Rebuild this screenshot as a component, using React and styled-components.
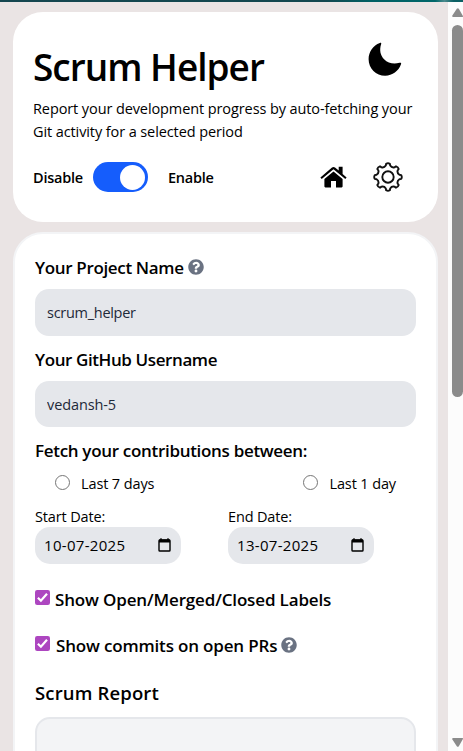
import React from 'react';
import styled, { createGlobalStyle } from 'styled-components';
import { FaQuestionCircle } from 'react-icons/fa';

const GlobalStyle = createGlobalStyle`
  *, *::before, *::after { box-sizing: border-box; }
  body {
    margin: 0;
    overflow: hidden;
    background: #eae4e4;
    color: #000;
    font-family: "Open Sans", "Noto Sans", sans-serif;
  }
`;

const Window = styled.div`
  display: grid;
  grid-template-rows: 2px 749px;
  height: 751px;
  overflow: hidden;
`;

const TopStrip = styled.div`
  background: linear-gradient(90deg, #14464f 0%, #12474f 70%, #006064 80%, #00676a 94%, #4b8a8d 96%, #0c6064 98%);
`;

const Body = styled.div`
  display: grid;
  grid-template-columns: 448px 15px;
  min-height: 0;
`;

const Popup = styled.main`
  display: flex;
  flex-direction: column;
  gap: 10px;
  padding: 10px 10px 0 13px;
  min-height: 0;
  overflow: hidden;
`;

const HeaderCard = styled.header`
  flex: none;
  height: 210px;
  padding: 29px 35px 0 20px;
  border-radius: 30px;
  background: #fff;
`;

const HeaderRow = styled.div`
  display: flex;
  justify-content: space-between;
  align-items: flex-start;
`;

const Title = styled.h1`
  margin: 0;
  font-size: 37px;
  font-weight: 600;
  line-height: 51px;
  height: 49px;
  letter-spacing: -1px;
`;

const Moon = styled.svg`
  width: 34px;
  height: 34px;
  margin: 1px 1px 0 0;
`;

const Tagline = styled.p`
  margin: 7px 0 0;
  font-size: 14.5px;
  line-height: 23px;
  letter-spacing: -0.1px;
  white-space: nowrap;
`;

const Controls = styled.div`
  display: flex;
  align-items: center;
  height: 30px;
  margin-top: 19px;
`;

const ToggleText = styled.span`
  width: ${(p) => p.$width}px;
  font-size: 14.5px;
  font-weight: 600;
  letter-spacing: -0.25px;
`;

const Toggle = styled.button`
  display: flex;
  justify-content: flex-end;
  align-items: center;
  width: 55px;
  height: 30px;
  margin-right: 20px;
  padding: 0 3px;
  border: 0;
  border-radius: 15px;
  background: #155dfc;
`;

const Knob = styled.span`
  width: 25px;
  height: 25px;
  border-radius: 50%;
  background: #fff;
`;

const HeaderIcons = styled.div`
  display: flex;
  align-items: center;
  gap: 26px;
  margin-left: auto;

  svg { display: block; }
`;

const FormCard = styled.section`
  flex: none;
  height: 620px;
  padding: 21px 20px 0;
  border: 2px solid #f3f4f6;
  border-radius: 30px;
  background: #fff;
`;

const Label = styled.div`
  display: flex;
  align-items: center;
  gap: 4px;
  height: 24px;
  font-size: 17px;
  font-weight: 600;
  white-space: nowrap;
  letter-spacing: ${(p) => p.$tracking || 0}px;
`;

const HelpIcon = styled(FaQuestionCircle)`
  width: 16px;
  height: 16px;
  color: #6a7282;
`;

const TextField = styled.input`
  display: block;
  width: 381px;
  height: ${(p) => p.$height}px;
  margin: 10px 0 11px;
  padding: 0 12px;
  border: 0;
  border-radius: 14px;
  background: #e5e7eb;
  color: #1e2939;
  font-family: inherit;
  font-size: 14.5px;
  letter-spacing: ${(p) => p.$tracking || 0}px;
`;

const PeriodRow = styled.div`
  display: flex;
  justify-content: space-between;
  height: 24px;
  margin-top: 9px;
  padding: 0 20px;
`;

const PeriodOption = styled.label`
  display: flex;
  align-items: center;
  gap: 11px;
  font-size: 14.5px;
  letter-spacing: -0.12px;
  white-space: nowrap;
`;

const Radio = styled.input`
  width: 15px;
  height: 15px;
  margin: 0 0 2px;
  appearance: none;
  border: 1px solid #767676;
  border-radius: 50%;
  background: #fff;
`;

const DateRow = styled.div`
  display: flex;
  gap: 47px;
  margin-top: 10px;
`;

const DateGroup = styled.div`
  width: 146px;
`;

const DateLabel = styled.div`
  height: 22px;
  font-size: 14.5px;
  line-height: 24px;
  letter-spacing: -0.15px;
`;

const DateField = styled.div`
  display: flex;
  align-items: center;
  justify-content: space-between;
  height: 37px;
  padding: 0 10px 1px 9px;
  border-radius: 15px;
  background: #e5e7eb;
  font-size: 15px;
  letter-spacing: 0.3px;
`;

const OptionRow = styled.label`
  display: flex;
  align-items: center;
  gap: ${(p) => p.$gap}px;
  height: 24px;
  margin-top: ${(p) => p.$top}px;
`;

const Check = styled.svg`
  flex: none;
  width: 15px;
  height: 15px;
  margin-bottom: 3px;
`;

const ReportTitle = styled.h2`
  height: 26px;
  margin: 23px 0 0;
  font-size: 18.5px;
  font-weight: 600;
  line-height: 26px;
  letter-spacing: 0.15px;
`;

const Report = styled.div`
  width: 381px;
  height: 200px;
  margin-top: 11px;
  border: 2px solid #e5e7eb;
  border-radius: 15px;
  background: #f3f4f6;
`;

const Scrollbar = styled.div`
  display: flex;
  flex-direction: column;
  align-items: center;
  padding: 6px 0 4px 4px;
  background: #fcfcfc;
`;

const Thumb = styled.div`
  width: 11px;
  height: 372px;
  margin: 8px 0 auto;
  border-radius: 6px;
  background: #8b8b8b;
`;

function Arrow({ down }) {
  return (
    <svg width="11" height="9" viewBox="0 0 11 9">
      <path
        d={down ? 'M.8 0h9.8q.7.5.2 1.2L6.8 8.2q-1 1.2-2 0L.2 1.2Q0 .4.8 0Z' : 'M.8 9h9.8q.7-.5.2-1.2L6.8.8q-1-1.2-2 0L.2 7.8Q0 8.6.8 9Z'}
        fill="#8b8b8b"
      />
    </svg>
  );
}

function HomeIcon() {
  return (
    <svg width="27" height="22" viewBox="0 0 27 22">
      <path d="M13.5 5.600 22.600 13V20.600Q22.600 21.400 21.600 21.400H16V15H11V21.400H5.400Q4.400 21.400 4.400 20.600V13Z" />
      <path d="M18.700.700H22.600V8L26.600 11.400 25.300 12.900 13.500 3.300 1.700 12.900.400 11.400 12 1.500Q13.500.300 15 1.500L18.700 4.600Z" />
    </svg>
  );
}

const TOOTH_ANGLES = [0, 45, 90, 135, 180, 225, 270, 315];

function polar(radius, degrees) {
  const a = ((degrees - 90) * Math.PI) / 180;
  return `${(15 + radius * Math.cos(a)).toFixed(2)} ${(15 + radius * Math.sin(a)).toFixed(2)}`;
}

const GEAR_OUTLINE =
  TOOTH_ANGLES.map(
    (a, i) =>
      `${i ? 'L' : 'M'}${polar(13.4, a - 8)}Q${polar(14.3, a)} ${polar(13.4, a + 8)}` +
      `L${polar(11.6, a + 11)}Q${polar(9.7, a + 22.5)} ${polar(11.6, a + 34)}`
  ).join('') + 'Z';

function GearIcon() {
  return (
    <svg width="30" height="30" viewBox="0 0 30 30" fill="none" stroke="#111" strokeWidth="1.9" strokeLinejoin="round">
      <path d={GEAR_OUTLINE} />
      <circle cx="15" cy="15" r="5.7" />
    </svg>
  );
}

function CalendarIcon() {
  return (
    <svg width="13" height="14" viewBox="0 0 13 14">
      <path d="M3 .3V3M10 .3V3" stroke="#000" strokeWidth="1.4" />
      <rect x="1" y="2" width="11" height="11" rx=".8" fill="none" stroke="#000" strokeWidth="1.4" />
      <path d="M1 1.5H12V4.5H1Z" />
    </svg>
  );
}

function CheckedBox() {
  return (
    <Check viewBox="0 0 15 15">
      <rect width="15" height="15" rx="2.2" fill="#ad46c0" />
      <path d="M2.9 7.7 5.9 10.7 12 3.8" fill="none" stroke="#fff" strokeWidth="2.2" />
    </Check>
  );
}

export default function App() {
  return (
    <Window>
      <GlobalStyle />
      <TopStrip />
      <Body>
        <Popup>
          <HeaderCard>
            <HeaderRow>
              <Title>Scrum Helper</Title>
              <Moon viewBox="0 0 34 34">
                <path d="M11.8.9C13.2.3 13.5.9 13.1 2.300C11.300 8 12.300 13.300 16.100 17.200C20.100 21.200 25.700 22.600 31.500 20.800C33 20.400 33.500 21 33 22.300C30.600 29.100 24.400 33.700 17.200 33.700C8 33.700.6 26.300.6 17.200C.6 9.800 5.200 3.300 11.800.9Z" />
              </Moon>
            </HeaderRow>
            <Tagline>
              Report your development progress by auto-fetching your
              <br />
              Git activity for a selected period
            </Tagline>
            <Controls>
              <ToggleText $width={60}>Disable</ToggleText>
              <Toggle>
                <Knob />
              </Toggle>
              <ToggleText $width={50}>Enable</ToggleText>
              <HeaderIcons>
                <HomeIcon />
                <GearIcon />
              </HeaderIcons>
            </Controls>
          </HeaderCard>

          <FormCard>
            <Label $tracking={-0.34}>
              Your Project Name <HelpIcon />
            </Label>
            <TextField $height={47} $tracking={-0.28} defaultValue="scrum_helper" />
            <Label $tracking={-0.4}>Your GitHub Username</Label>
            <TextField $height={46} $tracking={-0.1} defaultValue="vedansh-5" />
            <Label $tracking={-0.31}>Fetch your contributions between:</Label>
            <PeriodRow>
              <PeriodOption>
                <Radio type="radio" name="period" />
                Last 7 days
              </PeriodOption>
              <PeriodOption>
                <Radio type="radio" name="period" />
                Last 1 day
              </PeriodOption>
            </PeriodRow>
            <DateRow>
              <DateGroup>
                <DateLabel>Start Date:</DateLabel>
                <DateField>
                  10-07-2025 <CalendarIcon />
                </DateField>
              </DateGroup>
              <DateGroup>
                <DateLabel>End Date:</DateLabel>
                <DateField>
                  13-07-2025 <CalendarIcon />
                </DateField>
              </DateGroup>
            </DateRow>
            <OptionRow $gap={5} $top={23}>
              <CheckedBox />
              <Label $tracking={-0.15}>Show Open/Merged/Closed Labels</Label>
            </OptionRow>
            <OptionRow $gap={6} $top={22}>
              <CheckedBox />
              <Label $tracking={-0.17}>
                Show commits on open PRs <HelpIcon />
              </Label>
            </OptionRow>
            <ReportTitle>Scrum Report</ReportTitle>
            <Report />
          </FormCard>
        </Popup>
        <Scrollbar>
          <Arrow />
          <Thumb />
          <Arrow down />
        </Scrollbar>
      </Body>
    </Window>
  );
}
